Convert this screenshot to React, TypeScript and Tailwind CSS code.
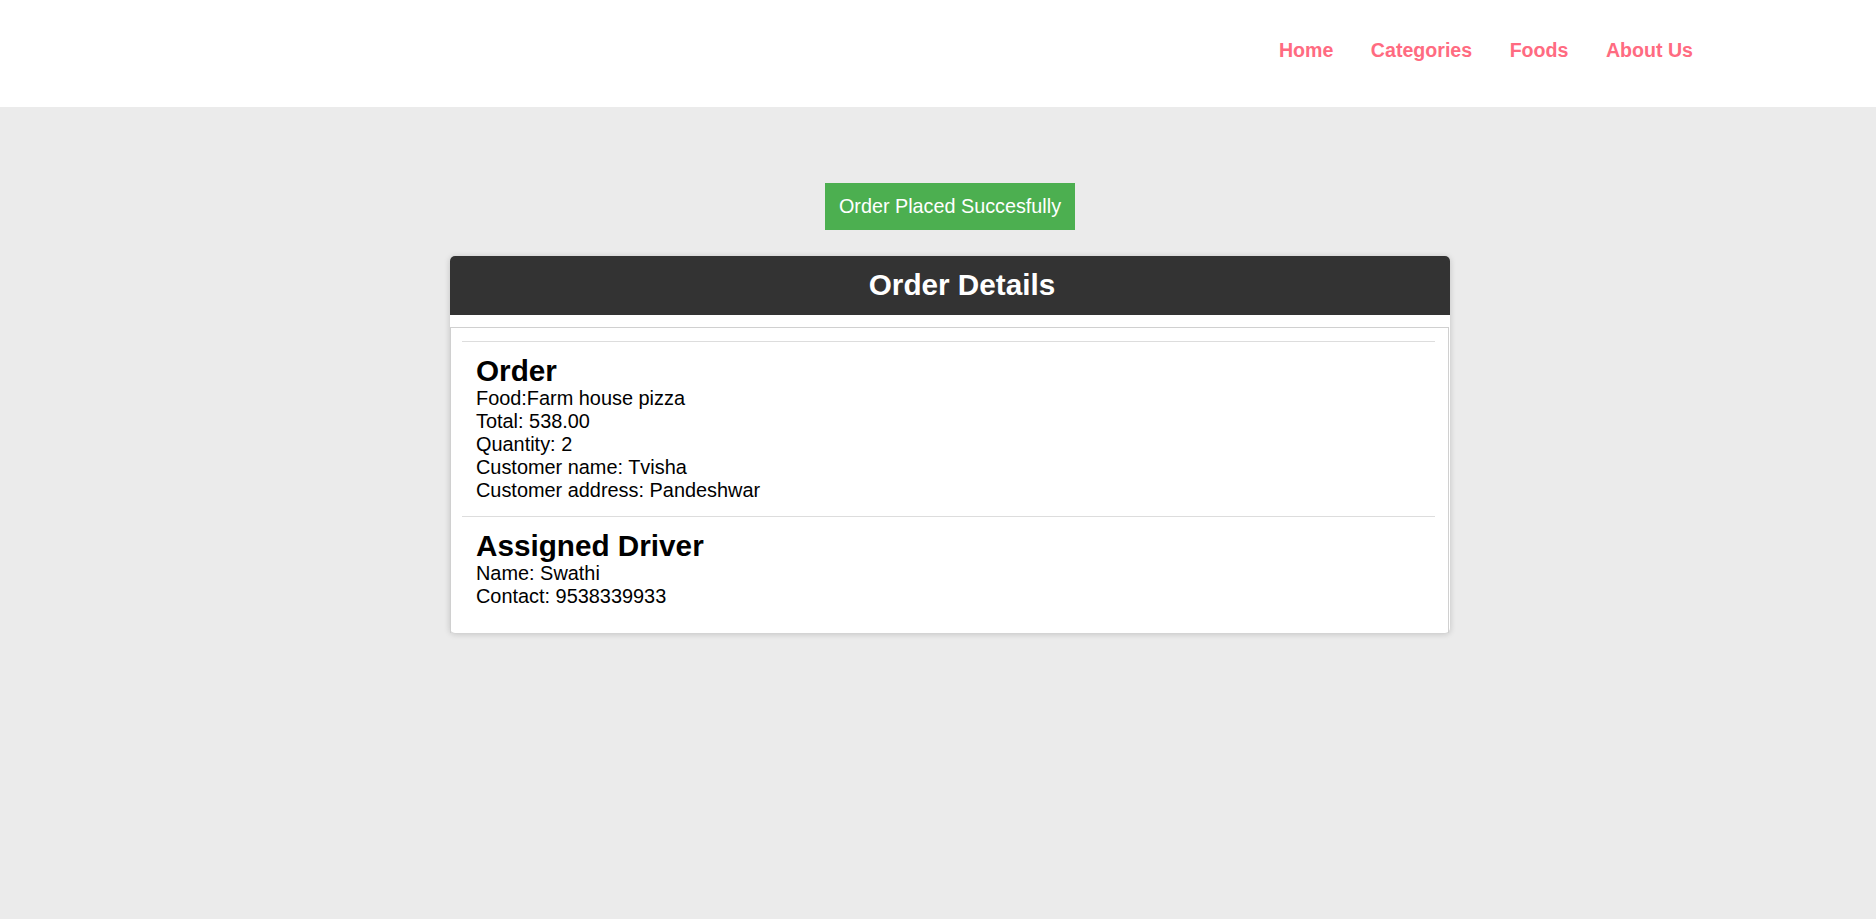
import React from "react";

export default function App() {
  const orderLines = [
    "Food:Farm house pizza",
    "Total: 538.00",
    "Quantity: 2",
    "Customer name: Tvisha",
    "Customer address: Pandeshwar",
  ];
  const driverLines = ["Name: Swathi", "Contact: 9538339933"];
  return (
    <div
      className="min-h-screen bg-[#ebebeb] text-black"
      style={{ fontFamily: '"Liberation Sans", Arial, sans-serif' }}
    >
      <header className="h-[107px] bg-white flex items-center justify-end pr-[183px] pb-[6px]">
        <nav className="flex items-center gap-[37.5px]">
          {["Home", "Categories", "Foods", "About Us"].map((n) => (
            <a key={n} className="text-[19.6px] font-bold text-[#ff6b81] leading-[23px] cursor-pointer">
              {n}
            </a>
          ))}
        </nav>
      </header>
      <main className="flex flex-col items-center pl-[24px] pt-[76px]">
        <div className="bg-[#4caf50] text-white text-[19.8px] leading-[23px] px-[13.5px] py-[12px]">
          Order Placed Succesfully
        </div>
        <div className="mt-[26px] w-[1000px] bg-white rounded-[5px] shadow-[0_1px_6px_rgba(0,0,0,0.18)]">
          <h2 className="h-[59px] bg-[#333333] rounded-t-[5px] text-white font-bold text-[29.7px] flex items-center justify-center pl-[24px]">
            Order Details
          </h2>
          <div className="mt-[12px] border-t border-x border-[#d0d0d0] pt-[13px] px-[11px] pb-[11px] mr-[1px]">
            <section className="border-t border-[#dddddd] pt-[12px] pb-[14px] pl-[14px] pr-[15px] mr-[2px]">
              <h3 className="text-[29.7px] font-bold leading-[33px]">Order</h3>
              {orderLines.map((l) => (
                <p key={l} className="text-[19.9px] leading-[23px]">
                  {l}
                </p>
              ))}
            </section>
            <section className="border-t border-[#dddddd] pt-[12px] pb-[14px] pl-[14px] pr-[15px] mr-[2px]">
              <h3 className="text-[29.7px] font-bold leading-[33px]">Assigned Driver</h3>
              {driverLines.map((l) => (
                <p key={l} className="text-[19.9px] leading-[23px]">
                  {l}
                </p>
              ))}
            </section>
          </div>
        </div>
      </main>
    </div>
  );
}
